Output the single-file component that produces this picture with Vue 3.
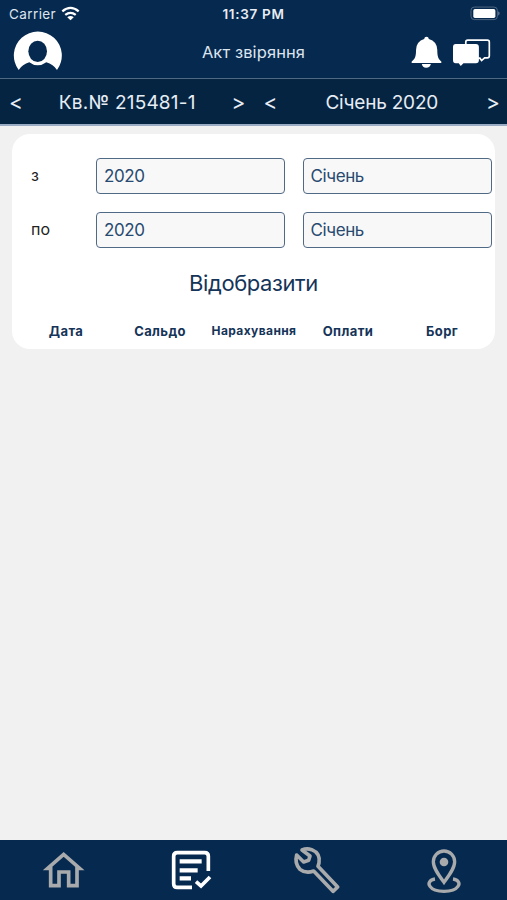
<script setup>
const periods = [
  { label: 'з', year: '2020', month: 'Січень' },
  { label: 'по', year: '2020', month: 'Січень' },
]
const columns = ['Дата', 'Сальдо', 'Нарахування', 'Оплати', 'Борг']
</script>

<template>
  <div class="screen">
    <header class="top">
      <div class="status">
        <div class="carrier">
          <span>Carrier</span>
          <svg class="wifi" viewBox="184 15 58 45" fill="none" stroke="#fff" stroke-width="7">
            <path d="M188 31Q213 10 238 31M197 42Q213 29 229 42" />
            <path d="M203 49Q213 42 223 49L213 58Z" fill="#fff" stroke="none" />
          </svg>
        </div>
        <div class="time">11:37 PM</div>
        <div class="power">
          <svg class="battery" viewBox="389 17 94 45">
            <rect x="392" y="20" width="80" height="38" rx="10" fill="none" stroke="#4f6681" stroke-width="3" />
            <rect x="399" y="26" width="67" height="27" rx="5" fill="#fff" />
            <path d="M475 33q7 6 0 13z" fill="#8796a8" />
          </svg>
        </div>
      </div>
      <div class="titlebar">
        <svg class="avatar" viewBox="39 90 150 120">
          <path fill="#fff" d="M56 207A72 72 0 1 1 171 207Q160 190 139 184Q127 193 113 193Q99 193 88 184Q67 190 56 207Z" />
          <ellipse cx="113" cy="151" rx="28" ry="32" fill="#06294f" />
        </svg>
        <h1>Акт звіряння</h1>
        <div class="actions">
          <svg class="bell" viewBox="213 112 92 98" fill="#fff">
            <path d="M259 114Q265 114 266 121Q290 128 291 153C291 172 294 181 303 188V192H215V188C225 181 228 172 228 153Q229 128 252 121Q253 114 259 114ZM245 195H272Q270 206 258 206Q247 206 245 195Z" />
          </svg>
          <svg class="chat" viewBox="336 118 116 86">
            <path d="M377 136V130Q377 124 383 124H441Q447 124 447 130V171Q447 177 441 177H433L424 185L419 178H414" fill="none" stroke="#fff" stroke-width="5" />
            <path d="M347 136H407Q416 136 416 145V184Q416 193 407 193H370L362 201L356 193H347Q339 193 339 184V145Q339 136 347 136Z" fill="#fff" />
          </svg>
        </div>
      </div>
    </header>

    <nav class="selectors">
      <div class="selector account">
        <span class="arrow">&lt;</span><span class="value">Кв.№ 215481-1</span><span class="arrow">&gt;</span>
      </div>
      <div class="selector month">
        <span class="arrow">&lt;</span><span class="value">Січень 2020</span><span class="arrow">&gt;</span>
      </div>
    </nav>

    <main>
      <section class="card">
        <div v-for="p in periods" :key="p.label" class="period">
          <span class="label">{{ p.label }}</span>
          <div class="field">{{ p.year }}</div>
          <div class="field">{{ p.month }}</div>
        </div>
        <div class="submit">Відобразити</div>
        <div class="columns">
          <span v-for="c in columns" :key="c" :class="{ long: c.length > 10 }">{{ c }}</span>
        </div>
      </section>
    </main>

    <footer class="tabs">
      <svg viewBox="10 15 180 180" fill="none" stroke="#a8aaac" stroke-width="11">
        <path d="M54 100L102 58L150 100H142V152H117V111H88V152H63V100Z" />
      </svg>
      <svg viewBox="390 15 180 180" fill="none" stroke="#fff">
        <path d="M486 157H442Q431 157 431 146V64Q431 53 442 53H524Q535 53 535 64V108" stroke-width="11" />
        <path d="M449 79H515M449 106H503M449 130H483" stroke-width="13" />
        <path d="M498 140L513 153L540 126" stroke-width="11" />
      </svg>
      <svg viewBox="21 15 180 180" fill="none" stroke="#a8aaac" stroke-width="11" stroke-linejoin="round">
        <path d="M66 45Q80 39 95 44Q122 55 117 84L114 94L173 156L159 169L101 108Q77 117 60 103Q43 86 50 60L71 81L86 76L90 63Z" />
      </svg>
      <svg viewBox="401 15 180 180" fill="none" stroke="#a8aaac" stroke-width="10">
        <path d="M491 142C475 120 459 99 459 80A32 32 0 0 1 523 80C523 99 507 120 491 142Z" />
        <circle cx="491" cy="81" r="13" fill="#a8aaac" stroke="none" />
        <path d="M464 132C448 134 442 145 449 154C463 174 519 174 533 154C540 145 534 134 518 132" />
      </svg>
    </footer>
  </div>
</template>

<style>
body {
  background: #f1f1f1;
}
</style>

<style scoped>
.screen {
  height: 900px;
  display: flex;
  flex-direction: column;
  font-family: Inter, "Liberation Sans", sans-serif;
  background: #f1f1f1;
  overflow: hidden;
}
.top {
  height: 78px;
  flex: none;
  background: #06294f;
  color: #fff;
}
.status {
  height: 27px;
  display: grid;
  grid-template-columns: 1fr 1fr 1fr;
  align-items: center;
  font-size: 13.5px;
}
.carrier {
  padding-left: 9px;
  display: flex;
  align-items: center;
  gap: 5px;
  color: #dde5ef;
  letter-spacing: 0.4px;
}
.wifi {
  width: 19px;
  height: 15px;
}
.time {
  text-align: center;
  font-weight: 600;
  color: #e8edf4;
  letter-spacing: 0.7px;
}
.power {
  display: flex;
  justify-content: flex-end;
  padding-right: 6px;
}
.battery {
  width: 31px;
  height: 15px;
}
.titlebar {
  height: 51px;
  display: grid;
  grid-template-columns: 1fr 1fr 1fr;
  align-items: center;
}
.avatar {
  width: 50px;
  height: 40px;
  margin: 0 0 4px 13px;
}
h1 {
  margin: 0 0 2px;
  font-size: 16.5px;
  font-weight: 400;
  letter-spacing: 0.1px;
  text-align: center;
  color: #dde5ef;
  white-space: nowrap;
}
.actions {
  display: flex;
  align-items: center;
  justify-content: flex-end;
  gap: 10px;
  padding-right: 16px;
}
.bell {
  width: 31px;
  height: 33px;
}
.chat {
  width: 39px;
  height: 29px;
}
.selectors {
  height: 48px;
  box-sizing: border-box;
  flex: none;
  display: grid;
  grid-template-columns: 1fr 1fr;
  background: #052441;
  border-top: 1px solid #4d6a84;
  border-bottom: 2px solid #9aacc4;
  color: #e6edf5;
}
.selector {
  display: flex;
  align-items: center;
  justify-content: space-between;
  padding: 0 8px 0 9px;
}
.selector.month {
  padding: 0 7px 0 10px;
}
.value {
  font-size: 19px;
  padding-top: 2px;
}
.account .value {
  letter-spacing: 0.2px;
}
.month .value {
  letter-spacing: -0.2px;
}
.arrow {
  font-size: 21px;
  line-height: 20px;
  padding-top: 3px;
}
main {
  flex: 1;
  padding: 8px 12px 0;
}
.card {
  height: 215px;
  box-sizing: border-box;
  padding: 24px 3px 0 19px;
  border-radius: 18px;
  background: #fff;
}
.period {
  display: grid;
  grid-template-columns: 47px 189px 189px;
  gap: 18px;
  height: 36px;
  margin-bottom: 18px;
}
.label {
  font-size: 16px;
  line-height: 34px;
  color: #222;
}
.field {
  box-sizing: border-box;
  border: 1.5px solid #506985;
  border-radius: 4px;
  background: #f8f8f9;
  padding-left: 7px;
  font-size: 17px;
  line-height: 34px;
  letter-spacing: -0.4px;
  color: #294a70;
}
.field + .field {
  padding-left: 6.5px;
}
.submit {
  height: 34px;
  line-height: 34px;
  margin: 0 0 0 -16px;
  text-align: center;
  font-size: 22px;
  letter-spacing: -0.4px;
  color: #153458;
}
.columns {
  display: grid;
  grid-template-columns: repeat(5, 94px);
  margin: 22px 0 0 -12px;
  text-align: center;
  font-size: 13px;
  line-height: 18px;
  font-weight: 700;
  letter-spacing: 0.4px;
  color: #153458;
}
.columns .long {
  font-size: 12px;
}
.tabs {
  height: 60px;
  flex: none;
  display: grid;
  grid-template-columns: repeat(4, 1fr);
  justify-items: center;
  background: #06294f;
}
.tabs svg {
  width: 60px;
  height: 60px;
}
</style>
